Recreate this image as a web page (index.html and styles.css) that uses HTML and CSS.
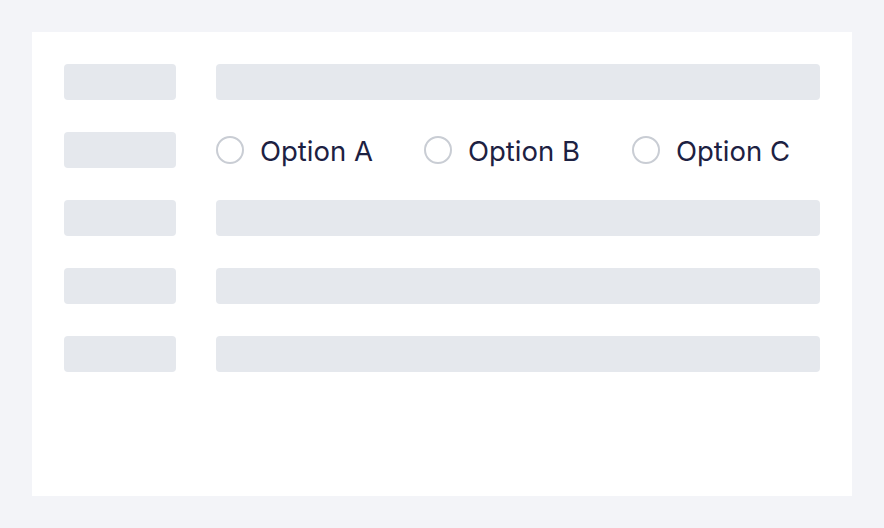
FILE: index.html
```html
<!DOCTYPE html>
<html lang="en">
<head>
<meta charset="utf-8">
<link rel="stylesheet" href="styles.css">
</head>
<body>
<div class="card">
  <div class="row"><div class="label"></div><div class="field"></div></div>
  <div class="row">
    <div class="label"></div>
    <div class="radios">
      <label class="option"><span class="circle"></span><span class="text">Option A</span></label>
      <label class="option"><span class="circle"></span><span class="text">Option B</span></label>
      <label class="option"><span class="circle"></span><span class="text">Option C</span></label>
    </div>
  </div>
  <div class="row"><div class="label"></div><div class="field"></div></div>
  <div class="row"><div class="label"></div><div class="field"></div></div>
  <div class="row"><div class="label"></div><div class="field"></div></div>
</div>
</body>
</html>
```
FILE: styles.css
```css
html, body {
  margin: 0;
  padding: 0;
  background: #f3f4f8;
  font-family: Inter, Roboto, "Noto Sans", sans-serif;
}
body {
  padding: 32px;
}
.card {
  background: #ffffff;
  width: 820px;
  height: 464px;
  box-sizing: border-box;
  padding: 32px;
  display: flex;
  flex-direction: column;
  gap: 32px;
}
.row {
  display: flex;
  align-items: center;
  gap: 40px;
  height: 36px;
}
.label {
  width: 112px;
  height: 36px;
  border-radius: 4px;
  background: #e5e8ed;
  flex-shrink: 0;
}
.field {
  flex: 1;
  height: 36px;
  border-radius: 4px;
  background: #e5e8ed;
}
.radios {
  display: flex;
  gap: 48px;
}
.option {
  display: flex;
  align-items: center;
  gap: 16px;
  width: 160px;
  flex-shrink: 0;
}
.circle {
  width: 28px;
  height: 28px;
  box-sizing: border-box;
  border: 2px solid #c9cdd4;
  border-radius: 50%;
  flex-shrink: 0;
}
.text {
  font-size: 27.5px;
  color: #1d2142;
  white-space: nowrap;
  line-height: 36px;
  padding-top: 2px;
}
```
